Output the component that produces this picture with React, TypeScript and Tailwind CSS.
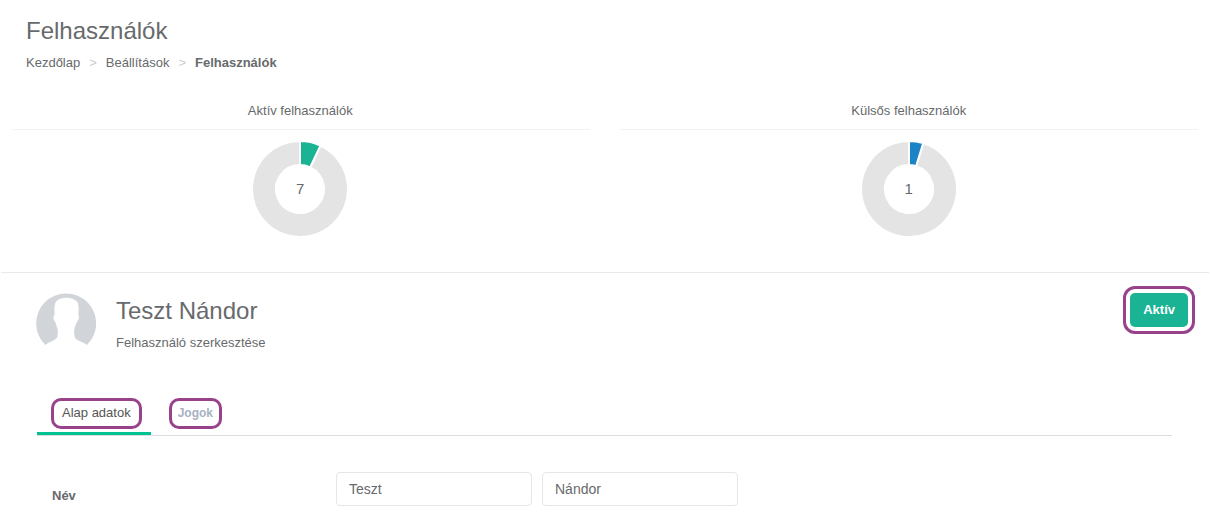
import { useState } from "react";

type Stat = {
  label: string;
  value: number;
  share: number;
  color: string;
};

const stats: Stat[] = [
  { label: "Aktív felhasználók", value: 7, share: 0.07, color: "#1ab394" },
  { label: "Külsős felhasználók", value: 1, share: 0.048, color: "#1c84c6" },
];

const tabs = ["Alap adatok", "Jogok"];

function point(radius: number, share: number) {
  const angle = share * 2 * Math.PI;
  return `${48 + radius * Math.sin(angle)} ${48 - radius * Math.cos(angle)}`;
}

function slice(from: number, to: number) {
  const large = to - from > 0.5 ? 1 : 0;
  return `M${point(48, from)} A48 48 0 ${large} 1 ${point(48, to)} L${point(24, to)} A24 24 0 ${large} 0 ${point(24, from)} Z`;
}

function Donut({ value, share, color }: Stat) {
  return (
    <div className="relative size-24">
      <svg viewBox="0 0 96 96" className="size-24" stroke="#fff" strokeWidth="2">
        <path d={slice(share, 1)} fill="#e4e4e4" />
        <path d={slice(0, share)} fill={color} />
      </svg>
      <span className="absolute inset-0 flex items-center justify-center text-[15px] leading-5">{value}</span>
    </div>
  );
}

function Avatar() {
  return (
    <svg viewBox="0 0 60 60" className="size-15 shrink-0" aria-hidden="true">
      <path
        d="M9.3 52A30 30 0 1 1 51 52C46.500 48.500 41 48 39 44.500C38 42.500 38 39 38.300 36C39.300 33 40.200 31 40.800 28.800C42.800 27 43.600 23.500 42.300 21.500C42.800 17 42.800 12 41.300 9C38 5.200 33 4.700 30 4.700C26 4.700 22 6 19.800 9C18.200 12 18.200 17 18.700 21.500C16.800 23.500 17.400 27 19.200 28.800C19.800 31 20.600 33 21.600 36C22 39 22 42.500 21 44.500C18.500 48 13.800 48.500 9.300 52Z"
        fill="#d1d5da"
      />
    </svg>
  );
}

export default function App() {
  const [activeTab, setActiveTab] = useState(tabs[0]);
  const [lastName, setLastName] = useState("Teszt");
  const [firstName, setFirstName] = useState("Nándor");

  return (
    <div className="bg-white pb-5 font-['Liberation_Sans',Arial,sans-serif] text-[13px] leading-5 text-[#676a6c]">
      <header className="px-[26px] pt-4">
        <h1 className="text-2xl leading-[30px]">Felhasználók</h1>
        <nav aria-label="Breadcrumb" className="mt-[7px]">
          <ol className="flex gap-[9px]">
            <li><a href="#home">Kezdőlap</a></li>
            <li aria-hidden="true" className="text-[#ccc]">&gt;</li>
            <li><a href="#settings">Beállítások</a></li>
            <li aria-hidden="true" className="text-[#ccc]">&gt;</li>
            <li className="font-bold" aria-current="page">Felhasználók</li>
          </ol>
        </nav>
      </header>

      <section className="grid grid-cols-2 gap-[30px] pt-7 pr-3 pb-[35px] pl-[11px]">
        {stats.map(stat => (
          <div key={stat.label} className="flex flex-col items-center">
            <h2 className="w-full border-b border-[#f3f3f4] pb-2 text-center">{stat.label}</h2>
            <div className="mt-[11px]">
              <Donut {...stat} />
            </div>
          </div>
        ))}
      </section>

      <main className="mx-px border-t border-[#e7eaec] px-[35px] pt-5">
        <div className="flex items-start">
          <Avatar />
          <div className="ml-5 flex-1 pt-[3px]">
            <h2 className="text-2xl leading-[30px]">Teszt Nándor</h2>
            <p className="mt-[7px]">Felhasználó szerkesztése</p>
          </div>
          <button
            type="button"
            className="-mr-3.5 h-[34px] rounded-[5px] bg-[#1ab394] px-[13px] font-bold text-white outline-[3px] outline-offset-4 outline-[#99428c]"
          >
            Aktív
          </button>
        </div>

        <div role="tablist" className="mt-[45px] mr-0.5 ml-px flex border-b border-[#ddd]">
          {tabs.map(tab => (
            <button
              key={tab}
              type="button"
              role="tab"
              aria-selected={activeTab === tab}
              onClick={() => setActiveTab(tab)}
              className={`border-b-3 pr-[9px] pb-[3px] ${activeTab === tab ? "border-[#00c292] pl-3.5 text-[#555]" : "border-transparent pl-[18px] text-xs font-bold text-[#a7b1c2]"}`}
            >
              <span className={`flex h-[31px] items-center rounded-[10px] border-3 border-[#99428c] pb-0.5 ${activeTab === tab ? "px-2" : "px-1.5"}`}>
                {tab}
              </span>
            </button>
          ))}
        </div>

        <form className="mt-9 flex items-start pl-4" onSubmit={e => e.preventDefault()}>
          <label htmlFor="last-name" className="w-[284px] pt-3.5 font-bold">Név</label>
          <div className="flex gap-2.5">
            <input
              id="last-name"
              value={lastName}
              onChange={e => setLastName(e.target.value)}
              className="h-[34px] w-[196px] rounded border border-[#e5e6e7] px-3 text-sm"
            />
            <input
              aria-label="Keresztnév"
              value={firstName}
              onChange={e => setFirstName(e.target.value)}
              className="h-[34px] w-[196px] rounded border border-[#e5e6e7] px-3 text-sm"
            />
          </div>
        </form>
      </main>
    </div>
  );
}
